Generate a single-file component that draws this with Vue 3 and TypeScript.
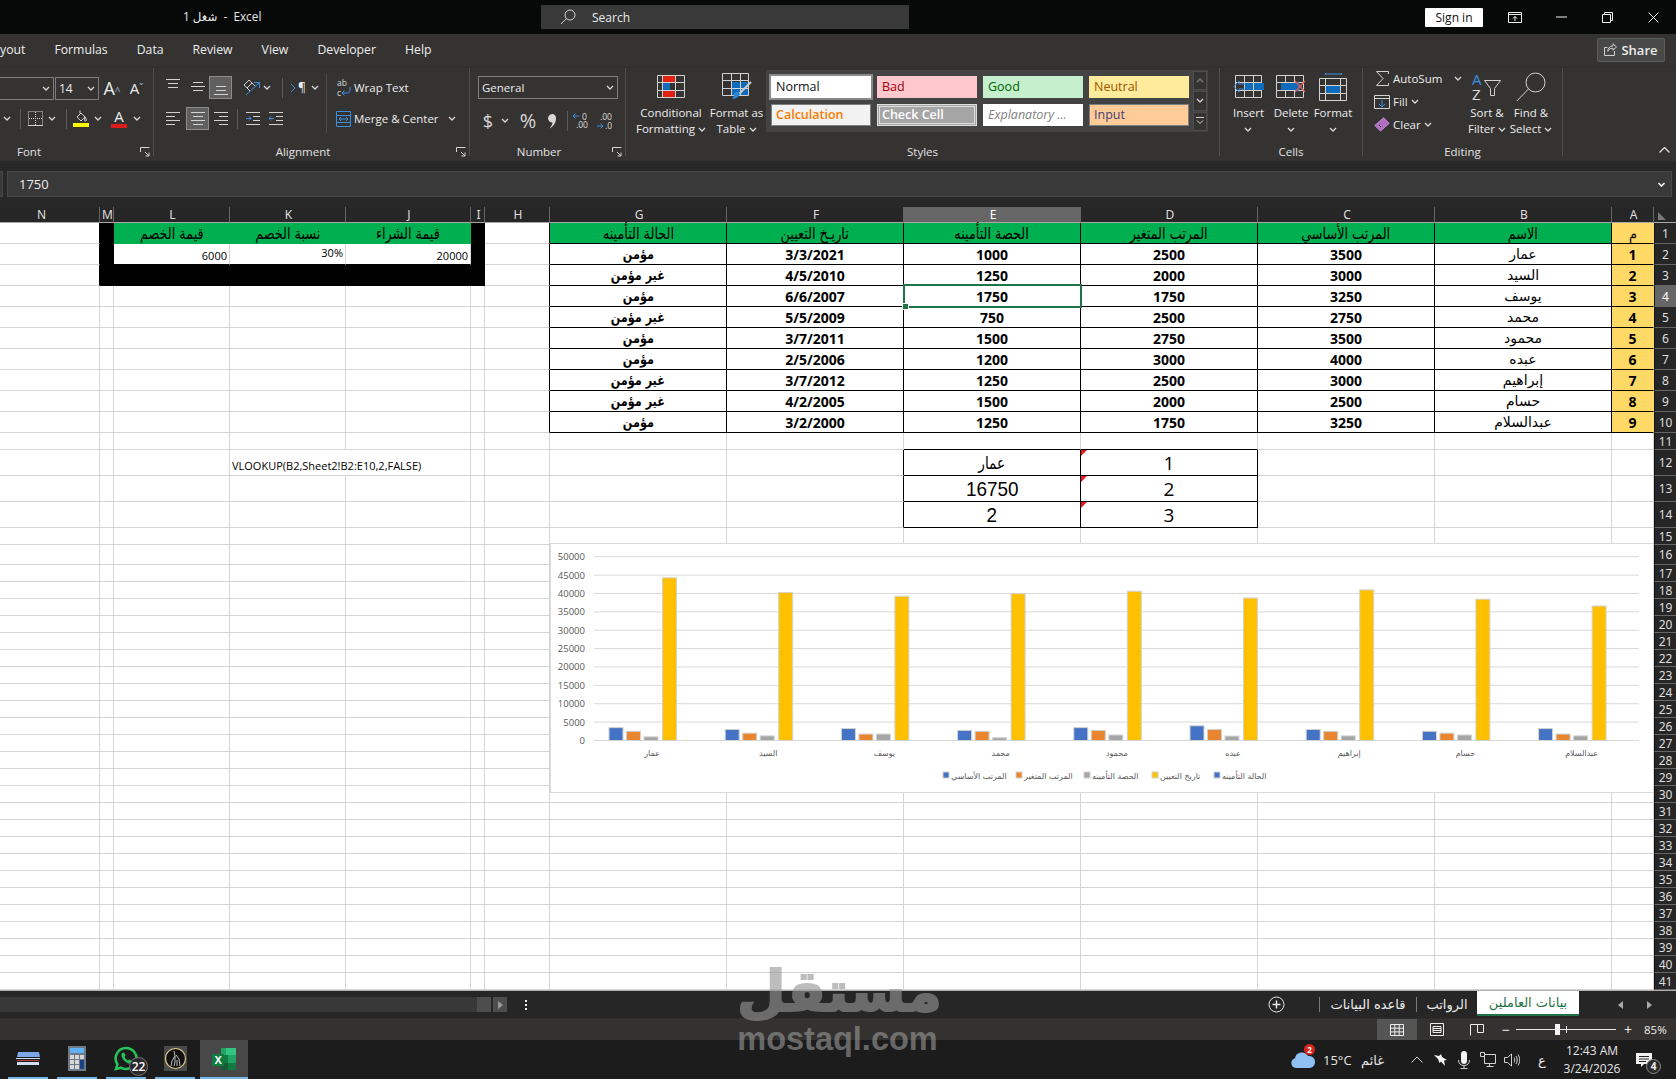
<template>
  <div class="app">
    <svg class="defs" width="0" height="0">
      <symbol id="chev" viewBox="0 0 8 5"><path d="M1 1l3 3 3-3" /></symbol>
      <symbol id="launch" viewBox="0 0 10 10"><path d="M.5 5V.5H9.5M5 5l4 4M9 5.5V9H5.5" /></symbol>
    </svg>

    <!-- title bar -->
    <div class="titlebar">
      <div class="doc-title">شغل 1 &nbsp;-&nbsp; Excel</div>
      <div class="search">
        <svg width="16" height="16" viewBox="0 0 16 16"><circle cx="10" cy="6" r="5" /><path d="M6.5 9.5L1 15" /></svg>
        <span>Search</span>
      </div>
      <div></div>
      <div class="signin">Sign in</div>
      <div></div>
      <div class="winbtn"><svg width="14" height="11" viewBox="0 0 14 11"><path d="M.5.5h13v10H.5zM.5 2.5h13M7 9V4.5M5 6.5l2-2 2 2" /></svg></div>
      <div class="winbtn"><svg width="11" height="2" viewBox="0 0 11 2"><path d="M0 1h11" /></svg></div>
      <div class="winbtn"><svg width="11" height="11" viewBox="0 0 11 11"><path d="M.5 2.5h8v8h-8zM2.5 2.5v-2h8v8h-2" /></svg></div>
      <div class="winbtn"><svg width="11" height="11" viewBox="0 0 11 11"><path d="M.5.5l10 10M10.5.5l-10 10" /></svg></div>
    </div>

    <!-- menu tabs -->
    <div class="menubar">
      <span v-for="m in menus" :key="m">{{ m }}</span>
      <div class="share">
        <svg width="13" height="13" viewBox="0 0 13 13"><path d="M9 .8l3.5 3.2L9 7.2V5.2C6 5.2 4.6 6.4 3.8 8.4 3.8 5.4 5.6 3 9 2.8zM10.5 8v4.5H.5v-8h3" /></svg>
        <span>Share</span>
      </div>
    </div>

    <!-- ribbon -->
    <div class="ribbon">
      <section class="grp g-font">
        <div class="gbody rows">
          <div class="tools f1">
            <div class="drop"><svg class="chev"><use href="#chev" /></svg></div>
            <div></div>
            <div class="drop size"><span>14</span><svg class="chev"><use href="#chev" /></svg></div>
            <div></div>
            <div class="t bigA">A<i>^</i></div>
            <div></div>
            <div class="t smallA">A<i>ˇ</i></div>
          </div>
          <div class="tools f2">
            <div class="t"><svg class="chev"><use href="#chev" /></svg></div>
            <div class="t"><b class="vsep"></b></div>
            <div class="t">
              <svg width="15" height="15" viewBox="0 0 15 15"><path d="M.5.5h14v14H.5z" stroke-dasharray="1 1" /><path d="M7.5 1v13M1 7.5h13" stroke-dasharray="1 1" /><path d="M0 14.5h15" /></svg>
            </div>
            <div class="t"><svg class="chev"><use href="#chev" /></svg></div>
            <div class="t"><b class="vsep"></b></div>
            <div class="t column">
              <svg width="14" height="13" viewBox="0 0 14 13"><path d="M6 .5v3M3 7l4-4 4 4-4 4zM11 7c1 1.500 2 3 1 4-1 .6-2-.4-1-4z" /></svg>
              <b class="colorbar yellow"></b>
            </div>
            <div class="t"><svg class="chev"><use href="#chev" /></svg></div>
            <div></div>
            <div class="t column"><span class="fontA">A</span><b class="colorbar red"></b></div>
            <div class="t"><svg class="chev"><use href="#chev" /></svg></div>
          </div>
        </div>
        <div class="glabel font-label"><span>Font</span><svg class="launch"><use href="#launch" /></svg></div>
      </section>

      <section class="grp g-align">
        <div class="gbody split">
          <div class="rows al-left">
            <div class="tools a1">
              <div></div>
              <div class="t"><svg width="14" height="23" viewBox="0 0 14 23"><path d="M0 3.500h14M2 7.500h10M2 11.500h10" /></svg></div>
              <div class="t"><svg width="14" height="23" viewBox="0 0 14 23"><path d="M2 6.500h10M0 10.500h14M2 14.500h10" /></svg></div>
              <div class="t on"><svg width="14" height="23" viewBox="0 0 14 23"><path d="M2 10.500h10M2 14.500h10M0 18.500h14" /></svg></div>
              <div></div>
              <div class="t">
                <svg width="18" height="18" viewBox="0 0 18 18">
                  <path d="M1 6l5-5 3 3-5 5zM4 9l3 3M9 4l3 3" />
                  <path class="blue" d="M3 16L16 4M11 3.500h5.500V9" />
                </svg>
              </div>
              <div class="t"><svg class="chev"><use href="#chev" /></svg></div>
              <div></div>
              <div class="t"><b class="vsep"></b></div>
              <div class="t rtl"><svg width="6" height="10" viewBox="0 0 6 10"><path class="blue" d="M1 1l4 4-4 4" /></svg><span>¶</span></div>
              <div class="t"><svg class="chev"><use href="#chev" /></svg></div>
            </div>
            <div class="tools a2">
              <div></div>
              <div class="t"><svg width="14" height="15" viewBox="0 0 14 15"><path d="M0 1.500h14M0 5.500h9M0 9.500h14M0 13.500h9" /></svg></div>
              <div class="t on"><svg width="14" height="15" viewBox="0 0 14 15"><path d="M0 1.500h14M2 5.500h10M0 9.500h14M2 13.500h10" /></svg></div>
              <div class="t"><svg width="14" height="15" viewBox="0 0 14 15"><path d="M0 1.500h14M5 5.500h9M0 9.500h14M5 13.500h9" /></svg></div>
              <div class="t"><b class="vsep"></b></div>
              <div class="t"><svg width="14" height="13" viewBox="0 0 14 13"><path d="M0 .5h14M7 4.500h7M7 8.500h7M0 12.500h14" /><path class="blue" d="M0 6.500h5M3 4.500l2 2-2 2" /></svg></div>
              <div class="t"><svg width="14" height="13" viewBox="0 0 14 13"><path d="M0 .5h14M7 4.500h7M7 8.500h7M0 12.500h14" /><path class="blue" d="M0 6.500h5M2 4.500l-2 2 2 2" /></svg></div>
            </div>
          </div>
          <div class="rows al-right">
            <div class="wide">
              <div class="t">
                <svg width="15" height="20" viewBox="0 0 15 20">
                  <text class="glyph" x="1" y="8" font-size="8.500">ab</text>
                  <text class="glyph" x="1" y="18" font-size="8.500">c</text>
                  <path class="blue" d="M14 9v3c0 2-1 3-3 3H6M8.500 12.500L6 15l2.500 2.500" />
                </svg>
              </div>
              <span class="lbl">Wrap Text</span>
            </div>
            <div class="wide">
              <div class="t">
                <svg width="15" height="16" viewBox="0 0 15 16">
                  <path class="blue" d="M.5.5h14v15H.5zM.5 4.500h14M.5 11.500h14M3 8h9M5 6L3 8l2 2M10 6l2 2-2 2" />
                </svg>
              </div>
              <span class="lbl">Merge &amp; Center</span>
              <svg class="chev mc"><use href="#chev" /></svg>
            </div>
          </div>
        </div>
        <div class="glabel"><span>Alignment</span><svg class="launch"><use href="#launch" /></svg></div>
      </section>

      <section class="grp g-num">
        <div class="gbody rows">
          <div class="general"><span>General</span><svg class="chev"><use href="#chev" /></svg></div>
          <div class="tools n2">
            <div></div>
            <div class="t dollar">$</div>
            <div class="t"><svg class="chev"><use href="#chev" /></svg></div>
            <div></div>
            <div class="t pct">%</div>
            <div></div>
            <div class="t">
              <svg width="10" height="16" viewBox="0 0 10 16"><path class="solid" d="M5 1a4 4 0 0 1 4 4.500c0 4-2.500 8-6.500 10 1.800-2 2.800-4 3-6A4 4 0 0 1 5 1z" /></svg>
            </div>
            <div class="t"><b class="vsep"></b></div>
            <div class="t">
              <svg width="18" height="18" viewBox="0 0 18 18">
                <path class="blue" d="M0 4h6M2.500 1.500L0 4l2.500 2.500" />
                <text class="glyph" x="9" y="8" font-size="8.500">0</text>
                <text class="glyph" x="3" y="16" font-size="8.500">.00</text>
              </svg>
            </div>
            <div></div>
            <div class="t">
              <svg width="18" height="18" viewBox="0 0 18 18">
                <text class="glyph" x="3" y="8" font-size="8.500">.00</text>
                <path class="blue" d="M0 14h6M3.500 11.500L6 14l-2.500 2.500" />
                <text class="glyph" x="8" y="17" font-size="8.500">.0</text>
              </svg>
            </div>
          </div>
        </div>
        <div class="glabel"><span>Number</span><svg class="launch"><use href="#launch" /></svg></div>
      </section>

      <section class="grp g-styles">
        <div class="gbody flexrow">
          <div class="big w-cond">
            <div class="bigicon">
              <svg width="28" height="23" viewBox="0 0 28 23">
                <path fill="#e3200f" stroke="none" d="M5 1h13v7H5zM5 15h14v7H5z" />
                <path fill="#0f6cbd" stroke="none" d="M5 8h8v7H5z" />
                <path d="M.5.5h27v22H.5zM.5 7.500h27M.5 15.500h27M5.500.5v22M18.500.5v22" />
              </svg>
            </div>
            <div class="biglabel">Conditional<br />Formatting <svg class="chev"><use href="#chev" /></svg></div>
          </div>
          <div class="big w-table">
            <div class="bigicon">
              <svg width="30" height="27" viewBox="0 0 30 27">
                <path fill="#0f6cbd" stroke="none" d="M10 9h17v13H10z" />
                <path d="M.5.500h26v22H.5zM.5 7.500h26M.5 15.500h26M9.500.5v22M18.500.5v22" />
                <path stroke="#c8c8c8" stroke-width="2" d="M29 9L17 21" />
                <path fill="#2b88d8" stroke="none" d="M12 21c2-3 5-2 6 0-1 3-5 5-8 5 1-1 2-3 2-5z" />
              </svg>
            </div>
            <div class="biglabel">Format as<br />Table <svg class="chev"><use href="#chev" /></svg></div>
          </div>
          <div class="gallery">
            <div class="cells">
              <div v-for="s in cellStyles" :key="s.name" class="style" :class="s.cls">{{ s.name }}</div>
            </div>
            <div class="galbtns">
              <div class="gb dim"><svg class="chev flip"><use href="#chev" /></svg></div>
              <div class="gb"><svg class="chev"><use href="#chev" /></svg></div>
              <div class="gb"><svg width="8" height="8" viewBox="0 0 8 8"><path d="M0 .5h8M1 3.500l3 3 3-3" /></svg></div>
            </div>
          </div>
        </div>
        <div class="glabel plain"><span>Styles</span></div>
      </section>

      <section class="grp g-cells">
        <div class="gbody flexrow">
          <div class="big w-ins">
            <div class="bigicon">
              <svg width="32" height="23" viewBox="0 0 32 23">
                <path d="M2.500.5h26v22h-26zM2.500 7.500h26M2.500 15.500h26M11.500.5v22M20.500.5v22" />
                <path fill="#0f6cbd" stroke="none" d="M12 8h8v7h-8zM21 8h10v7H21z" />
                <path class="blue" d="M12 9H6V6l-5 5.500L6 17v-3h6" />
              </svg>
            </div>
            <div class="biglabel">Insert<br /><svg class="chev"><use href="#chev" /></svg></div>
          </div>
          <div class="big w-del">
            <div class="bigicon">
              <svg width="30" height="23" viewBox="0 0 30 23">
                <path d="M.5.5h27v22H.5zM.5 7.500h27M.5 15.500h27M9.500.5v22M18.500.5v22" />
                <path fill="#0f6cbd" stroke="none" d="M5 8h16v-2l5 5.500-5 5.500v-2H5z" />
                <path stroke="#e05a4e" stroke-width="1.300" d="M19 6l10 11M29 6L19 17" />
              </svg>
            </div>
            <div class="biglabel">Delete<br /><svg class="chev"><use href="#chev" /></svg></div>
          </div>
          <div class="big w-fmt">
            <div class="bigicon">
              <svg width="28" height="28" viewBox="0 0 28 28">
                <path class="blue" d="M6.500 0v2M22.500 0v2M6.500 1h16" />
                <path fill="#0f6cbd" stroke="none" d="M7 13h15v7H7z" />
                <path d="M.5 5.500h27v22H.5zM.5 12.500h27M.5 20.500h27M6.500 5.500v22M21.500 5.500v22" />
              </svg>
            </div>
            <div class="biglabel">Format<br /><svg class="chev"><use href="#chev" /></svg></div>
          </div>
        </div>
        <div class="glabel plain"><span>Cells</span></div>
      </section>

      <section class="grp g-edit">
        <div class="gbody flexrow">
          <div class="editcol">
            <div class="editrow">
              <div class="editicon"><svg width="13" height="15" viewBox="0 0 13 15"><path d="M12.500 3V.5H.5L7 7.500.5 14.500h12V12" /></svg></div>
              <span class="lbl">AutoSum</span>
              <svg class="chev autosum"><use href="#chev" /></svg>
            </div>
            <div class="editrow">
              <div class="editicon"><svg width="16" height="14" viewBox="0 0 16 14"><path d="M.5.500h15v13H.5zM.5 3.500h15" /><path class="blue" d="M8 5v7M5 9l3 3 3-3" /></svg></div>
              <span class="lbl">Fill</span>
              <svg class="chev"><use href="#chev" /></svg>
            </div>
            <div class="editrow">
              <div class="editicon"><svg width="16" height="15" viewBox="0 0 16 15"><path class="eraser" d="M9.500.8l5.700 5.500L6.500 14 .8 8.500z" /><path stroke="#000" d="M5 8l2 2" /></svg></div>
              <span class="lbl">Clear</span>
              <svg class="chev"><use href="#chev" /></svg>
            </div>
          </div>
          <div class="big w-sort">
            <div class="bigicon">
              <svg class="sorticon" width="30" height="29" viewBox="0 0 30 29">
                <text class="glyph blue-t" x="0" y="13" font-size="15">A</text>
                <text class="glyph" x="0" y="28" font-size="15">Z</text>
                <path d="M12.500 8.500h16l-6 8v7h-4v-7z" />
              </svg>
            </div>
            <div class="biglabel">Sort &amp;<br />Filter <svg class="chev"><use href="#chev" /></svg></div>
          </div>
          <div class="big w-find">
            <div class="bigicon">
              <svg width="30" height="30" viewBox="0 0 30 30"><circle cx="19.500" cy="10.500" r="9.500" /><path d="M12.500 17L.8 29" /></svg>
            </div>
            <div class="biglabel">Find &amp;<br />Select <svg class="chev"><use href="#chev" /></svg></div>
          </div>
        </div>
        <div class="glabel plain"><span>Editing</span></div>
      </section>

      <svg class="collapse" width="11" height="6" viewBox="0 0 11 6"><path d="M.5 5.500l5-5 5 5" /></svg>
    </div>

    <!-- formula bar -->
    <div class="formula-wrap">
      <div class="namebox"></div>
      <div class="formula">
        <span>1750</span>
        <svg class="chev fchev"><use href="#chev" /></svg>
      </div>
    </div>

    <!-- worksheet -->
    <div class="sheet">
      <div class="grid">
        <template v-for="(row, r) in sheetRows" :key="r">
          <div v-for="(cell, c) in row" :key="c" class="cell" :class="cell.cls"><span>{{ cell.text }}</span></div>
        </template>
      </div>

      <div class="chart">
        <svg width="1102" height="248" viewBox="551 544 1102 248">
          <g class="gridlines">
            <path v-for="t in ticks" :key="t" :d="`M594 ${yOf(t)}H1639`" />
          </g>
          <text v-for="t in ticks" :key="'l' + t" class="axis" x="585" :y="yOf(t) + 3.500" text-anchor="end">{{ t }}</text>
          <g v-for="(e, i) in employees" :key="e.name">
            <rect
              v-for="(b, j) in barsOf(e)"
              :key="j"
              :x="609 + 116.200 * i + barOffsets[j]"
              :y="yOf(b)"
              width="14"
              :height="740.500 - yOf(b)"
              :fill="seriesColors[j]"
            />
            <text class="axis ar" :x="652 + 116.200 * i" y="756" text-anchor="middle">{{ e.name }}</text>
          </g>
          <g v-for="l in legend" :key="l.text">
            <rect :x="l.x" y="772" width="6" height="6" :fill="l.color" />
            <text class="axis ar" :x="l.x + 8" y="779">{{ l.text }}</text>
          </g>
        </svg>
      </div>

      <div class="watermark">
        <div class="wm-ar">مستقل</div>
        <div class="wm-en">mostaql.com</div>
      </div>
    </div>

    <!-- sheet tabs -->
    <div class="tabbar">
      <div class="hscroll"></div>
      <div class="hbtn"></div>
      <div class="hbtn arrow"><i></i></div>
      <div class="dots"><i></i><i></i><i></i></div>
      <svg class="addsheet" width="17" height="17" viewBox="0 0 17 17"><circle cx="8.500" cy="8.500" r="7.500" /><path stroke-width="1.500" d="M8.500 4.500v8M4.500 8.500h8" /></svg>
      <b class="tabsep s1"></b>
      <span class="tab t1">قاعده البيانات</span>
      <b class="tabsep"></b>
      <span class="tab t2">الرواتب</span>
      <span class="tab active">بيانات العاملين</span>
      <i class="tri left"></i>
      <i class="tri right"></i>
    </div>

    <!-- status bar -->
    <div class="statusbar">
      <div class="view on">
        <svg width="14" height="12" viewBox="0 0 14 12"><path d="M.5.500h13v11H.5zM.5 4.200h13M.5 7.900h13M4.800.5v11M9.200.5v11" /></svg>
      </div>
      <div class="view">
        <svg width="14" height="13" viewBox="0 0 14 13"><path d="M.5.500h13v12H.5zM3 3.500h8v6H3zM3 5.500h8M3 7.500h8" /></svg>
      </div>
      <div class="view">
        <svg width="14" height="12" viewBox="0 0 14 12"><path d="M.5 11.500V.5h13v8H7.500V.5" /></svg>
      </div>
      <span class="zoombtn">−</span>
      <div class="slider"><i class="tick"></i><i class="thumb"></i></div>
      <span class="zoombtn">+</span>
      <span class="zoomval">85%</span>
    </div>

    <!-- taskbar -->
    <div class="taskbar">
      <div class="apps">
        <div class="app-btn">
          <svg width="24" height="15" viewBox="0 0 24 15">
            <path fill="#7ba7e8" stroke="none" d="M2 1h21l1 5H1z" />
            <path fill="#cfdcf2" stroke="none" d="M0 7h24v1H0zM1 11h22v3H1z" />
            <path fill="#b53a3a" stroke="none" d="M1 9h22v1H1z" />
          </svg>
        </div>
        <div class="app-btn">
          <svg width="18" height="25" viewBox="0 0 18 25">
            <path fill="#6f7a88" stroke="none" d="M0 0h18v25H0z" />
            <path fill="#5fb2f5" stroke="none" d="M2 2h14v5H2z" />
            <path fill="#d6d6d6" stroke="none" d="M2 9h4v4H2zM7 9h4v4H7zM12 9h4v4h-4zM2 14h4v4H2zM7 14h4v4H7zM2 19h4v4H2zM7 19h4v4H7z" />
            <path fill="#1d3f86" stroke="none" d="M12 14h4v9h-4z" />
          </svg>
        </div>
        <div class="app-btn whats">
          <svg width="24" height="25" viewBox="0 0 24 25">
            <path stroke="#25c45a" stroke-width="2.500" d="M12 2a10.500 10.500 0 1 1-5 19.700L2 23l1.400-4.700A10.500 10.500 0 0 1 12 2z" />
            <path fill="#25c45a" stroke="none" d="M8 7l2-.5 1.500 3-1 1.500c.8 1.500 2 2.600 3.500 3.400l1.500-1 3 1.600-.5 2c-1 1-3 1-5-.2-2.500-1.400-4.500-3.600-5.300-6-.4-1.500-.2-2.800.3-3.800z" />
          </svg>
          <span class="count">22</span>
        </div>
        <div class="app-btn">
          <svg width="23" height="25" viewBox="0 0 23 25">
            <path fill="#4a4a4a" stroke="none" d="M0 0h23v25H0z" />
            <circle cx="11.500" cy="12.500" r="10" fill="#111" stroke="#d8c48a" stroke-width="1.200" />
            <path stroke="#bdbdbd" d="M10 5l1 5-3 5-1 5M12 9l3 4 1 7M11 10v6l-1 4M13 14v6" />
          </svg>
        </div>
        <div class="app-btn excel">
          <svg width="24" height="22" viewBox="0 0 24 22">
            <path fill="#21a366" stroke="none" d="M9 0h15v22H9z" />
            <path fill="#33c481" stroke="none" d="M14 0h10v7H14z" />
            <path fill="#107c41" stroke="none" d="M9 7h7v8H9zM16 15h8v7h-8z" />
            <path fill="#185c37" stroke="none" d="M9 15h7v7H9z" />
            <path fill="#107c41" stroke="none" d="M0 6h12v12H0z" />
            <text class="x" x="2.500" y="16" font-size="11">X</text>
          </svg>
        </div>
      </div>
      <div class="tray">
        <div class="t weather">
          <svg width="24" height="19" viewBox="0 0 24 19">
            <path fill="#8fc0f2" stroke="none" d="M5 18a5 5 0 0 1-1-9.800A7 7 0 0 1 17 6a5.500 5.500 0 0 1 2 12z" />
          </svg>
          <b class="wbadge">2</b>
        </div>
        <div></div>
        <span class="tray-txt">15°C</span>
        <div></div>
        <span class="tray-txt">غائم</span>
        <div></div>
        <div class="t"><svg width="12" height="7" viewBox="0 0 12 7"><path d="M.5 6.500L6 1l5.500 5.500" /></svg></div>
        <div class="t">
          <svg width="14" height="12" viewBox="0 0 14 12"><path class="white" d="M0 1l5 1 2-2 1 3 5 3-3 .5L11 12 7 7.500 5.500 9 4 5z" /></svg>
        </div>
        <div class="t">
          <svg width="12" height="18" viewBox="0 0 12 18"><path class="white" d="M3 3a3 3 0 0 1 6 0v7a3 3 0 0 1-6 0z" /><path d="M.5 9c0 3.500 2 5.500 5.500 5.500S11.500 12.500 11.500 9M6 14.500V17M2.500 17.500h7" /></svg>
        </div>
        <div class="t">
          <svg width="16" height="15" viewBox="0 0 16 15"><path d="M4.500 2.500h11v9h-11zM9.500 11.500v3M6.500 14.500h7M.5.5h4v4h-4z" /></svg>
        </div>
        <div class="t">
          <svg width="16" height="14" viewBox="0 0 16 14"><path d="M.5 4.500h3l4-3.500v12l-4-3.500h-3zM10 4.500c1 1.500 1 3.500 0 5M12 3c1.700 2.500 1.700 5.500 0 8M14 1.500c2.300 3.500 2.300 7.500 0 11" /></svg>
        </div>
        <span class="tray-txt t">ع</span>
        <div class="clock"><span>12:43 AM</span><span>3/24/2026</span></div>
        <div class="t notify">
          <svg width="16" height="14" viewBox="0 0 16 14"><path class="white" d="M0 0h16v11H8l-3 3v-3H0z" /><path stroke="#222" d="M3 3.500h10M3 6h10M3 8.500h7" /></svg>
          <b class="nbadge">4</b>
        </div>
        <div></div>
      </div>
    </div>
  </div>
</template>

<script setup lang="ts">
interface Employee {
  no: number
  name: string
  basic: number
  variable: number
  share: number
  date: string
  status: string
}

interface Cell {
  text: string
  cls: string
}

const insured = 'مؤمن'
const notInsured = 'غير مؤمن'

const employees: Employee[] = [
  { no: 1, name: 'عمار', basic: 3500, variable: 2500, share: 1000, date: '3/3/2021', status: insured },
  { no: 2, name: 'السيد', basic: 3000, variable: 2000, share: 1250, date: '4/5/2010', status: notInsured },
  { no: 3, name: 'يوسف', basic: 3250, variable: 1750, share: 1750, date: '6/6/2007', status: insured },
  { no: 4, name: 'محمد', basic: 2750, variable: 2500, share: 750, date: '5/5/2009', status: notInsured },
  { no: 5, name: 'محمود', basic: 3500, variable: 2750, share: 1500, date: '3/7/2011', status: insured },
  { no: 6, name: 'عبده', basic: 4000, variable: 3000, share: 1200, date: '2/5/2006', status: insured },
  { no: 7, name: 'إبراهيم', basic: 3000, variable: 2500, share: 1250, date: '3/7/2012', status: notInsured },
  { no: 8, name: 'حسام', basic: 2500, variable: 2000, share: 1500, date: '4/2/2005', status: notInsured },
  { no: 9, name: 'عبدالسلام', basic: 3250, variable: 1750, share: 1250, date: '3/2/2000', status: insured },
]

const menus = ['yout', 'Formulas', 'Data', 'Review', 'View', 'Developer', 'Help']

const cellStyles = [
  { name: 'Normal', cls: 's-normal' },
  { name: 'Bad', cls: 's-bad' },
  { name: 'Good', cls: 's-good' },
  { name: 'Neutral', cls: 's-neutral' },
  { name: 'Calculation', cls: 's-calc' },
  { name: 'Check Cell', cls: 's-check' },
  { name: 'Explanatory ...', cls: 's-expl' },
  { name: 'Input', cls: 's-input' },
]

// sheet runs right to left, so the columns are listed from the left edge of the screen
const columns = ['N', 'M', 'L', 'K', 'J', 'I', 'H', 'G', 'F', 'E', 'D', 'C', 'B', 'A']
const ROW_COUNT = 41

const cellMap: Record<string, Cell> = {}

function put(key: string, text: string, cls: string) {
  cellMap[key] = { text, cls }
}

const headers: [string, string][] = [
  ['A', 'م'],
  ['B', 'الاسم'],
  ['C', 'المرتب الأساسي'],
  ['D', 'المرتب المتغير'],
  ['E', 'الحصة التأمينه'],
  ['F', 'تاريـخ التعيين'],
  ['G', 'الحالة التأمينه'],
]
headers.forEach(([col, text]) => put(col + '1', text, col === 'A' ? 'yel head-ar' : 'green head-ar'))

employees.forEach((e, i) => {
  const r = i + 2
  put('A' + r, String(e.no), 'yel bold')
  put('B' + r, e.name, 'box name')
  put('C' + r, String(e.basic), 'box bold')
  put('D' + r, String(e.variable), 'box bold')
  put('E' + r, String(e.share), r === 4 ? 'box bold cursor' : 'box bold')
  put('F' + r, e.date, 'box bold')
  put('G' + r, e.status, 'box status')
})

put('H1', '', 'edge')
for (let r = 2; r <= 10; r++) put('H' + r, '', 'edge')

// the purchase block on the left, sitting in a black frame
for (const r of [1, 2, 3]) {
  put('N' + r, '', 'edge')
  put('M' + r, '', 'black')
  put('I' + r, '', 'black')
}
put('J1', 'قيمة الشراء', 'green head-ar flat')
put('K1', 'نسبة الخصم', 'green head-ar flat')
put('L1', 'قيمة الخصم', 'green head-ar flat')
put('J2', '20000', 'small white-cell')
put('K2', '30%', 'small white-cell raised')
put('L2', '6000', 'small white-cell')
put('J3', '', 'black')
put('K3', '', 'black')
put('L3', '', 'black')
put('K12', 'VLOOKUP(B2,Sheet2!B2:E10,2,FALSE)', 'overflow')

put('D11', '', 'under')
put('E11', '', 'under')
put('F12', '', 'edge')
put('F13', '', 'edge')
put('F14', '', 'edge')
put('E12', 'عمار', 'box large-ar')
put('E13', '16750', 'box large')
put('E14', '2', 'box large')
put('D12', '1', 'box lookup note')
put('D13', '2', 'box lookup note')
put('D14', '3', 'box lookup note')

const sheetRows: Cell[][] = []
sheetRows.push([
  ...columns.map((c) => ({ text: c, cls: c === 'E' ? 'colhead sel' : c === 'N' ? 'colhead col-n' : 'colhead' })),
  { text: '', cls: 'colhead corner' },
])
for (let r = 1; r <= ROW_COUNT; r++) {
  const row: Cell[] = columns.map((c) => cellMap[c + r] ?? { text: '', cls: '' })
  row.push({ text: String(r), cls: r === 4 ? 'rowhead sel' : 'rowhead' })
  sheetRows.push(row)
}

// chart
const ticks = [50000, 45000, 40000, 35000, 30000, 25000, 20000, 15000, 10000, 5000, 0]
const barOffsets = [0, 17.5, 35, 53.5]
const seriesColors = ['#4472c4', '#e9852f', '#a5a5a5', '#ffc000']

const legend = [
  { x: 943, color: '#4472c4', text: 'المرتب الأساسي' },
  { x: 1016, color: '#e9852f', text: 'المرتب المتغير' },
  { x: 1084, color: '#a5a5a5', text: 'الحصة التأمينه' },
  { x: 1152, color: '#ffc000', text: 'تاريخ التعيين' },
  { x: 1214, color: '#4472c4', text: 'الحالة التأمينه' },
]

function yOf(v: number) {
  return 740.5 - (v / 5000) * 18.38
}

// Excel plots the date column as its serial number
function serial(date: string) {
  const [m, d, y] = date.split('/').map(Number)
  return Date.UTC(y, m - 1, d) / 86400000 + 25569
}

function barsOf(e: Employee) {
  return [e.basic, e.variable, e.share, serial(e.date)]
}
</script>

<style>
html,
body {
  margin: 0;
  background: #262626;
  overflow: hidden;
}
</style>

<style scoped>
.app {
  width: 1676px;
  height: 1079px;
  position: relative;
  overflow: hidden;
  display: flex;
  flex-direction: column;
  font-family: "Open Sans", "DejaVu Sans", sans-serif;
  font-size: 11.5px;
  color: #ececec;
  background: #262626;
}
.defs {
  position: absolute;
}
svg {
  display: block;
  fill: none;
  stroke: #d2d2d2;
  stroke-width: 1;
  flex: none;
}
.sorticon {
  overflow: visible;
}
.blue {
  stroke: #3c8fe0;
}
.solid {
  fill: #d8d8d8;
  stroke: none;
}
.white {
  fill: #f2f2f2;
  stroke: none;
}
.eraser {
  fill: #b26cc4;
  stroke: #c58ad4;
}
.glyph {
  fill: #dcdcdc;
  stroke: none;
  font-family: "Open Sans", sans-serif;
}
.blue-t {
  fill: #3c8fe0;
}
.x {
  fill: #fff;
  stroke: none;
  font-family: "Liberation Sans", sans-serif;
  font-weight: 700;
}
.chev {
  width: 8px;
  height: 5px;
  display: inline-block;
  stroke: #d8d8d8;
  stroke-width: 1.3;
}
.flip {
  transform: rotate(180deg);
}

/* title bar */
.titlebar {
  height: 34px;
  flex: none;
  display: grid;
  grid-template-columns: 541px 368px 1fr 58px 9px repeat(4, 46px);
  align-items: center;
  background: #070808;
}
.doc-title {
  padding-left: 183px;
  font-size: 11.8px;
  color: #e8e8e8;
  margin-top: -2px;
}
.search {
  height: 24px;
  background: #393939;
  display: flex;
  align-items: center;
  gap: 16px;
  padding-left: 19px;
  font-size: 12px;
}
.signin {
  height: 19px;
  background: #fff;
  color: #111;
  text-align: center;
  line-height: 19px;
  font-size: 12px;
  border-radius: 1px;
}
.winbtn {
  display: flex;
  justify-content: center;
}
.winbtn svg {
  stroke: #f0f0f0;
}

/* menu */
.menubar {
  height: 34px;
  flex: none;
  box-sizing: border-box;
  padding-bottom: 3px;
  display: flex;
  align-items: center;
  gap: 29px;
  background: #343332;
  font-size: 12.25px;
  color: #ededed;
}
.share {
  margin-left: auto;
  margin-right: 11px;
  width: 68px;
  height: 24px;
  box-sizing: border-box;
  background: #484848;
  border: 1px solid #5c5c5c;
  border-radius: 2px;
  display: flex;
  align-items: center;
  justify-content: center;
  gap: 4px;
  font-weight: 600;
  font-size: 13px;
}

/* ribbon */
.ribbon {
  height: 93px;
  flex: none;
  display: flex;
  background: #343332;
  box-shadow: 0 1px 2px #111;
}
.grp {
  box-sizing: border-box;
  display: flex;
  flex-direction: column;
  height: 88px;
  border-right: 1px solid #4e4e4e;
  flex: none;
}
.g-font {
  width: 154px;
}
.g-align {
  width: 316px;
}
.g-num {
  width: 156px;
}
.g-styles {
  width: 594px;
}
.g-cells {
  width: 143px;
}
.g-edit {
  width: 200px;
}
.gbody {
  height: 76px;
  flex: none;
}
.rows {
  display: flex;
  flex-direction: column;
  gap: 8px;
  padding-top: 8px;
  height: 68px;
}
.flexrow,
.split {
  display: flex;
}
.glabel {
  display: flex;
  align-items: center;
  height: 17px;
  font-size: 11.5px;
  color: #e2e2e2;
}
.glabel span {
  flex: 1;
  text-align: center;
}
.launch {
  width: 10px;
  height: 10px;
  margin: 0 3px 0 4px;
}
.font-label span {
  text-align: left;
  padding-left: 17px;
}
.tools {
  display: grid;
  height: 23px;
  align-items: center;
}
.t {
  display: flex;
  align-items: center;
  justify-content: center;
  height: 100%;
}
.t.column {
  flex-direction: column;
}
.on {
  background: #5f5f5f;
  box-shadow: inset 0 0 0 1px #8c8c8c;
}
.vsep {
  width: 1px;
  height: 20px;
  background: #5a5a5a;
}
.f1 {
  grid-template-columns: 54px 1px 44px 5px 16px 9px 15px;
}
.f2 {
  grid-template-columns: 14px 13px 16px 17px 12px 18px 16px 4px 18px 18px;
}
.drop {
  box-sizing: border-box;
  height: 23px;
  border: 1px solid #7c7c7c;
  border-left: 0;
  display: flex;
  align-items: center;
  justify-content: flex-end;
  padding-right: 3px;
}
.size {
  border-left: 1px solid #7c7c7c;
  justify-content: space-between;
  padding-left: 3px;
  font-size: 12px;
}
.bigA {
  font-size: 18px;
  align-items: baseline;
}
.smallA {
  font-size: 15px;
}
.bigA i,
.smallA i {
  font-style: normal;
  font-size: 10px;
  color: #9cb8dc;
}
.colorbar {
  width: 16px;
  height: 4px;
}
.yellow {
  background: #ffff00;
}
.red {
  background: #e01b1b;
}
.fontA {
  font-size: 15px;
  line-height: 15px;
}
.a1 {
  grid-template-columns: 6px 26px 23px 23px 10px 20px 10px 4px 12px 20px 14px;
}
.a2 {
  grid-template-columns: 6px 26px 23px 24px 8px 23px 24px;
}
.al-left {
  width: 173px;
  box-sizing: border-box;
  border-right: 1px solid #4e4e4e;
  height: 59px;
  margin-top: 6px;
  padding-top: 2px;
}
.al-right {
  width: 142px;
  height: 59px;
  margin-top: 6px;
  padding-top: 2px;
}
.rtl {
  gap: 2px;
  font-size: 12px;
}
.wide {
  display: flex;
  align-items: center;
  height: 23px;
  padding-left: 8px;
}
.wide .t {
  width: 16px;
}
.lbl {
  white-space: nowrap;
  font-size: 11.5px;
}
.wide .lbl {
  padding-left: 3px;
}
.mc {
  margin-left: 9px;
}
.general {
  box-sizing: border-box;
  margin-left: 8px;
  width: 140px;
  height: 23px;
  border: 1px solid #7c7c7c;
  display: flex;
  align-items: center;
  justify-content: space-between;
  padding: 0 3px;
}
.n2 {
  grid-template-columns: 10px 16px 18px 4px 20px 4px 20px 10px 20px 5px 18px;
}
.dollar {
  font-size: 18px;
  color: #d8d8d8;
}
.pct {
  font-size: 20px;
  color: #d8d8d8;
}

/* big buttons */
.big {
  display: flex;
  flex-direction: column;
  align-items: center;
  padding-top: 2px;
  flex: none;
}
.bigicon {
  height: 33px;
  display: flex;
  align-items: center;
  margin-bottom: 2px;
}
.biglabel {
  text-align: center;
  line-height: 16px;
  font-size: 11.5px;
  white-space: nowrap;
}
.biglabel .chev {
  vertical-align: 1px;
}
.w-cond {
  width: 74px;
  margin-left: 8px;
}
.w-table {
  width: 57px;
}
.w-ins {
  width: 41px;
  margin-left: 8px;
}
.w-del {
  width: 44px;
}
.w-fmt {
  width: 40px;
}
.w-sort,
.w-find {
  width: 44px;
}

/* styles gallery */
.gallery {
  margin: 2px 0 0 1px;
  width: 442px;
  height: 62px;
  background: #434343;
  display: flex;
  box-sizing: border-box;
  padding: 1px 1px 1px 5px;
  justify-content: space-between;
}
.cells {
  display: grid;
  grid-template-columns: repeat(4, 100px);
  grid-template-rows: 22px 22px;
  column-gap: 6px;
  row-gap: 6px;
  padding-top: 5px;
}
.style {
  box-sizing: border-box;
  font-size: 12.5px;
  line-height: 20px;
  padding-left: 4px;
  white-space: nowrap;
  overflow: hidden;
  border: 1px solid transparent;
}
.s-normal {
  background: #fff;
  color: #111;
  outline: 2px solid #8a8a8a;
}
.s-bad {
  background: #ffc7ce;
  color: #9c0006;
}
.s-good {
  background: #c6efce;
  color: #006100;
}
.s-neutral {
  background: #ffeb9c;
  color: #9c5700;
}
.s-calc {
  background: #f2f2f2;
  color: #fa7d00;
  border-color: #7f7f7f;
  font-weight: 600;
}
.s-check {
  background: #a5a5a5;
  color: #fff;
  font-weight: 600;
  border: 3px double #dedede;
  line-height: 16px;
  padding-left: 2px;
}
.s-expl {
  background: #fff;
  color: #7f7f7f;
  font-style: italic;
}
.s-input {
  background: #ffcc99;
  color: #3f3f76;
  border-color: #7f7f7f;
}
.galbtns {
  width: 14px;
  display: flex;
  flex-direction: column;
  gap: 1px;
}
.gb {
  flex: 1;
  background: #343332;
  border: 1px solid #4e4e4e;
  box-sizing: border-box;
  display: flex;
  align-items: center;
  justify-content: center;
}
.dim svg {
  stroke: #7a7a7a;
}

/* editing */
.editcol {
  width: 102px;
  box-sizing: border-box;
  padding-left: 11px;
  margin-top: -1px;
  flex: none;
}
.editrow {
  height: 23px;
  display: flex;
  align-items: center;
  gap: 3px;
}
.editicon {
  width: 16px;
  display: flex;
  justify-content: center;
}
.autosum {
  margin-left: 9px;
}
.collapse {
  margin: 79px 0 0 96px;
  stroke: #e0e0e0;
  stroke-width: 1.3;
}

/* formula bar */
.formula-wrap {
  height: 36px;
  flex: none;
  box-sizing: border-box;
  padding-top: 10px;
  display: flex;
  gap: 4px;
  background: #282828;
}
.namebox {
  width: 3px;
  background: #393939;
  border: 1px solid #474747;
  border-left: 0;
  box-sizing: border-box;
}
.formula {
  width: 1665px;
  box-sizing: border-box;
  background: #393939;
  border: 1px solid #474747;
  display: flex;
  align-items: center;
  justify-content: space-between;
  padding: 0 5px 0 11px;
  font-size: 13px;
}
.fchev {
  stroke: #f0f0f0;
  stroke-width: 1.6;
  width: 9px;
}

/* sheet */
.sheet {
  position: relative;
  flex: none;
  height: 793px;
  box-sizing: border-box;
  padding-top: 10px;
  background: #282828;
}
.grid {
  display: grid;
  grid-template-columns: 100px 14px 116px 116px 125px 14px 65px repeat(6, 177px) 42px 22px;
  grid-template-rows: 16px repeat(10, 21px) 17px repeat(3, 26px) 17px 20px repeat(25, 17px);
  background: #fff;
}
.cell {
  box-sizing: border-box;
  border-right: 1px solid #d4d4d4;
  border-bottom: 1px solid #d4d4d4;
  color: #000;
  display: flex;
  align-items: center;
  justify-content: center;
  min-width: 0;
  white-space: nowrap;
  font-family: "Noto Sans", "DejaVu Sans", sans-serif;
  font-size: 13px;
}
.colhead {
  background: #262626;
  color: #dedede;
  font-size: 12px;
  padding-left: 2px;
  border-right: 1px solid #666;
  border-bottom: 1px solid #a8a8a8;
}
.col-n {
  padding-left: 0;
  padding-right: 16px;
}
.colhead.sel {
  background: #666;
  color: #fff;
}
.corner {
  border-right: 0;
  position: relative;
}
.corner::after {
  content: "";
  position: absolute;
  left: 4px;
  top: 5px;
  width: 8px;
  height: 8px;
  background: #777;
  clip-path: polygon(0 0, 0 100%, 100% 100%);
}
.rowhead {
  background: #262626;
  color: #dedede;
  font-size: 12px;
  border-right: 0;
  border-bottom: 1px solid #666;
  border-left: 1px solid #111;
}
.rowhead.sel {
  background: #666;
  color: #fff;
}
.green {
  background: #00b050;
  border-right-color: #000;
  border-bottom-color: #000;
}
.yel {
  background: #ffd966;
  border-right-color: #ffd966;
  border-bottom-color: #000;
}
.flat {
  border-right-color: #00b050;
  border-bottom-color: #00b050;
}
.head-ar {
  font-family: "DejaVu Sans", sans-serif;
  font-size: 16px;
}
.head-ar span,
.status span,
.large-ar span {
  display: inline-block;
  transform: scaleX(0.8);
}
.box {
  border-right-color: #000;
  border-bottom-color: #000;
}
.edge {
  border-right-color: #000;
}
.under {
  border-bottom-color: #000;
}
.bold {
  font-weight: 700;
  font-size: 14px;
}
.name {
  font-family: "DejaVu Sans", sans-serif;
  font-size: 14px;
}
.status {
  font-family: "DejaVu Sans", sans-serif;
  font-weight: 700;
  font-size: 14px;
}
.black {
  background: #000;
  border-color: #000;
}
.small {
  justify-content: flex-end;
  font-family: "Open Sans", sans-serif;
  font-size: 11px;
  padding: 0 2px 1px 0;
  align-items: flex-end;
}
.white-cell {
  border-bottom-color: #000;
}
.raised {
  align-items: flex-start;
  padding-top: 1px;
}
.overflow {
  justify-content: flex-start;
  align-items: flex-end;
  font-family: "Open Sans", sans-serif;
  font-size: 11px;
  padding: 0 0 2px 2px;
  overflow: visible;
  border-right-color: transparent;
}
.large {
  font-family: "Liberation Sans", sans-serif;
  font-size: 21px;
}
.large span {
  display: inline-block;
  transform: scaleX(0.9);
}
.large-ar {
  font-family: "DejaVu Sans", sans-serif;
  font-size: 17px;
}
.lookup {
  font-family: "Open Sans", sans-serif;
  font-size: 19px;
}
.note {
  position: relative;
}
.note::before {
  content: "";
  position: absolute;
  left: 0;
  top: 0;
  width: 6px;
  height: 6px;
  background: #e01b1b;
  clip-path: polygon(0 0, 100% 0, 0 100%);
}
.cursor {
  position: relative;
}
.cursor::before {
  content: "";
  position: absolute;
  left: -1px;
  top: -2px;
  right: -2px;
  bottom: -2px;
  border: 2px solid #1f7346;
}
.cursor::after {
  content: "";
  position: absolute;
  left: -2px;
  bottom: -4px;
  width: 5px;
  height: 5px;
  background: #1f7346;
  border: 1px solid #fff;
}

/* chart floats over the grid */
.chart {
  position: absolute;
  left: 551px;
  top: 347px;
  width: 1102px;
  height: 248px;
  background: #fff;
  outline: 1px solid #d9d9d9;
}
.gridlines {
  stroke: #d9d9d9;
}
.axis {
  fill: #595959;
  stroke: none;
  font-size: 9.5px;
  font-family: "Open Sans", sans-serif;
}
.ar {
  font-family: "DejaVu Sans", sans-serif;
  font-size: 8px;
}

/* watermark */
.watermark {
  position: absolute;
  left: 737px;
  top: 764px;
  width: 201px;
  text-align: center;
  color: #969696;
  opacity: 0.62;
  pointer-events: none;
  z-index: 3;
}
.wm-ar {
  font-family: "DejaVu Sans", sans-serif;
  font-weight: 700;
  font-size: 56px;
  line-height: 62px;
  -webkit-text-stroke: 2px #969696;
}
.wm-en {
  font-family: "Liberation Sans", sans-serif;
  font-weight: 700;
  font-size: 32.5px;
  line-height: 32px;
}

/* tabs */
.tabbar {
  height: 28px;
  flex: none;
  box-sizing: border-box;
  border-top: 1px solid #b0b0b0;
  display: flex;
  align-items: center;
  background: #262626;
  font-family: "DejaVu Sans", sans-serif;
}
.hscroll {
  width: 477px;
  height: 15px;
  background: #383838;
}
.hbtn {
  width: 14px;
  height: 15px;
  background: #4d4d4d;
  margin-right: 2px;
}
.hbtn.arrow {
  display: flex;
  align-items: center;
  justify-content: center;
}
.hbtn.arrow i {
  border-left: 5px solid #999;
  border-top: 4px solid transparent;
  border-bottom: 4px solid transparent;
}
.dots {
  margin-left: 16px;
  display: flex;
  flex-direction: column;
  gap: 2px;
}
.dots i {
  width: 2px;
  height: 2px;
  background: #eee;
}
.addsheet {
  margin-left: 741px;
  stroke: #e8e8e8;
}
.tabsep {
  width: 1px;
  height: 15px;
  background: #7a7a7a;
}
.tabsep.s1 {
  margin-left: 34px;
}
.tab {
  font-size: 13px;
  white-space: nowrap;
}
.t1 {
  width: 96px;
  text-align: center;
}
.t2 {
  width: 60px;
  text-align: center;
}
.active {
  width: 102px;
  height: 25px;
  box-sizing: border-box;
  background: #fff;
  color: #1f7346;
  border-bottom: 2px solid #1f7346;
  text-align: center;
  line-height: 23px;
  align-self: flex-start;
}
.tri {
  width: 0;
  height: 0;
  border-top: 4px solid transparent;
  border-bottom: 4px solid transparent;
}
.tri.left {
  margin-left: 39px;
  border-right: 5px solid #aaa;
}
.tri.right {
  margin-left: 24px;
  border-left: 5px solid #aaa;
}

/* status */
.statusbar {
  height: 22px;
  flex: none;
  display: flex;
  align-items: center;
  box-sizing: border-box;
  border-top: 1px solid #2d2d2d;
  background: #343230;
  padding-left: 1377px;
  font-size: 12px;
}
.view {
  width: 40px;
  height: 22px;
  display: flex;
  align-items: center;
  justify-content: center;
}
.view svg {
  stroke: #ececec;
}
.view.on {
  background: #555;
  box-shadow: none;
}
.zoombtn {
  width: 12px;
  margin-left: 3px;
  text-align: center;
  font-size: 14px;
}
.slider {
  position: relative;
  width: 100px;
  height: 1px;
  margin: 0 3px 0 4px;
  background: #e6e6e6;
}
.thumb {
  position: absolute;
  left: 39px;
  top: -5px;
  width: 5px;
  height: 11px;
  background: #f2f2f2;
}
.tick {
  position: absolute;
  left: 50px;
  top: -3px;
  width: 1px;
  height: 7px;
  background: #e6e6e6;
}
.zoomval {
  margin-left: 10px;
  font-size: 11.5px;
}

/* taskbar */
.taskbar {
  flex: 1;
  display: flex;
  background: #1c1c1c;
  font-size: 13px;
}
.apps {
  display: flex;
  padding-left: 8px;
  gap: 9px;
}
.app-btn {
  width: 40px;
  box-sizing: border-box;
  border-bottom: 2px solid #76b9ed;
  display: flex;
  align-items: center;
  justify-content: center;
  position: relative;
}
.excel {
  width: 48px;
  margin-left: -4px;
  background: #484848;
}
.count {
  position: absolute;
  left: 23px;
  top: 17px;
  width: 19px;
  height: 19px;
  box-sizing: border-box;
  border-radius: 50%;
  background: #2a2a2a;
  border: 1px solid #777;
  color: #fff;
  font-size: 12px;
  line-height: 17px;
  text-align: center;
  font-weight: 600;
}
.tray {
  margin-left: auto;
  display: grid;
  grid-template-columns: 24px 8px 30px 8px 24px 20px 24px 23px 23px 25px 24px 36px 64px 40px 12px;
  align-items: center;
  color: #e4e4e4;
}
.tray-txt {
  white-space: nowrap;
  font-size: 13px;
}
.weather,
.notify {
  position: relative;
}
.wbadge {
  position: absolute;
  right: 0;
  top: 4px;
  width: 11px;
  height: 11px;
  border-radius: 50%;
  background: #d8261c;
  color: #fff;
  font-size: 8px;
  line-height: 11px;
  text-align: center;
}
.nbadge {
  position: absolute;
  left: 22px;
  top: 19px;
  width: 15px;
  height: 15px;
  box-sizing: border-box;
  border-radius: 50%;
  background: #2a2a2a;
  border: 1px solid #888;
  color: #f0f0f0;
  font-size: 10px;
  line-height: 13px;
  text-align: center;
}
.clock {
  display: flex;
  flex-direction: column;
  align-items: center;
  line-height: 18px;
  font-size: 12px;
}
</style>
